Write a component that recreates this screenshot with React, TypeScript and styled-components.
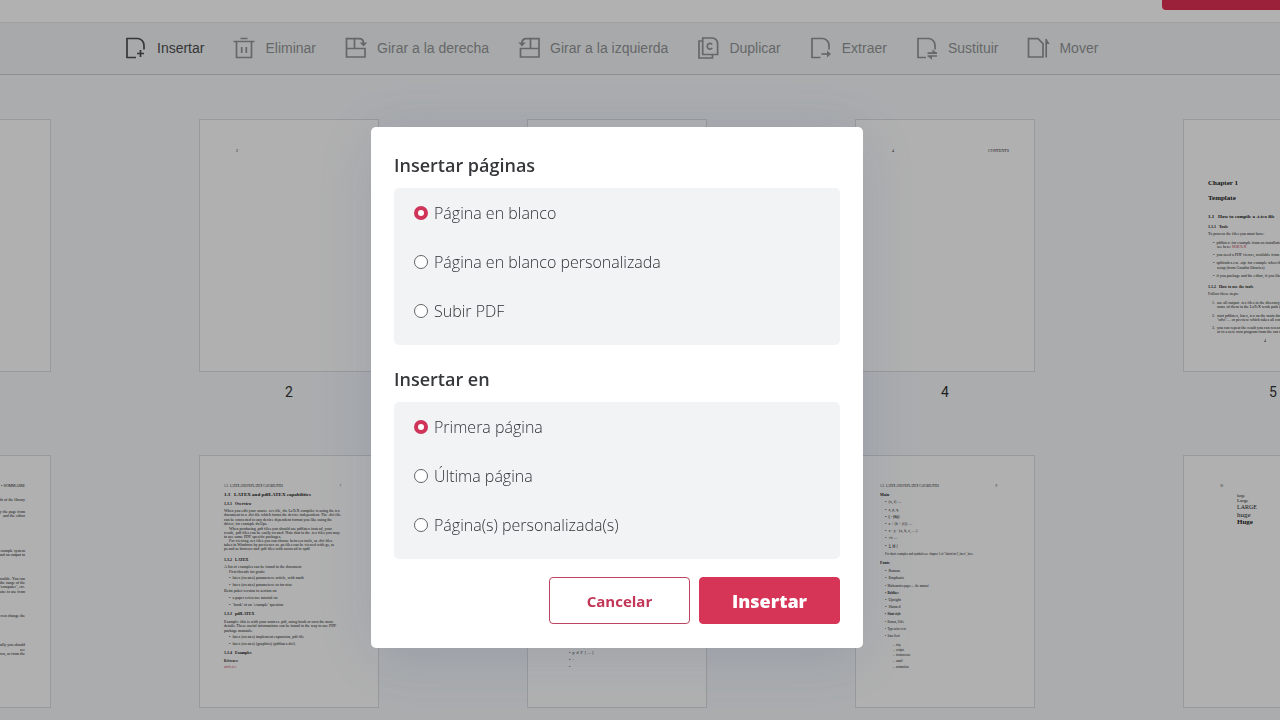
import React, { useState } from "react";
import styled, { createGlobalStyle, css } from "styled-components";

const GlobalStyle = createGlobalStyle`
  *, *::before, *::after { box-sizing: border-box; }
  body {
    margin: 0;
    background: #f4f7fa;
    font-family: "Open Sans", "Noto Sans", sans-serif;
  }
`;

/* ---------- page shell ---------- */

const Shell = styled.div`
  height: 100vh;
  overflow: hidden;
  background: #f4f7fa;
`;

const TopBar = styled.header`
  display: flex;
  justify-content: flex-end;
  align-items: flex-start;
  height: 23px;
  background: #fefefe;
  border-bottom: 1px solid #e6e7e9;
`;

const ExportButton = styled.button`
  width: 118px;
  height: 10px;
  padding: 0;
  border: 0;
  border-bottom-left-radius: 4px;
  background: #de2e52;
`;

const Toolbar = styled.nav`
  display: flex;
  align-items: center;
  gap: 28px;
  height: 52px;
  padding: 0 0 2px 124px;
  background: #f1f3f4;
  border-bottom: 1px solid #c8cacd;
`;

const ToolButton = styled.button<{ $active?: boolean }>`
  display: flex;
  align-items: center;
  gap: 9px;
  padding: 0;
  border: 0;
  background: none;
  color: ${(p) => (p.$active ? "#4c4e50" : "#929496")};
  font: 14px/20px "Liberation Sans", Arial, sans-serif;
  white-space: nowrap;
`;

const IconSvg = styled.svg`
  width: 24px;
  height: 24px;
  flex: none;
  fill: none;
  stroke: currentColor;
  stroke-width: 1.7;

  .solid {
    fill: currentColor;
    stroke: none;
  }
`;

/* ---------- thumbnails ---------- */

const PageGrid = styled.main`
  display: grid;
  grid-template-columns: repeat(5, 180px);
  justify-content: center;
  column-gap: 148px;
  row-gap: 51px;
  padding: 44px 46px 0 0;
`;

const Thumb = styled.figure`
  margin: 0;
`;

const Sheet = styled.div<{ $left: number; $right: number }>`
  height: 253px;
  padding: 28px ${(p) => p.$right}px 0 ${(p) => p.$left}px;
  overflow: hidden;
  background: #fdfdfd;
  border: 1px solid #d8dbdf;
`;

const Caption = styled.figcaption`
  padding-top: 8px;
  text-align: center;
  color: #333;
  font-family: Roboto, sans-serif;
  font-size: 14px;
  line-height: 24px;
`;

const Line = styled.div<{
  $gap: number;
  $size: number;
  $indent: number;
  $bold?: boolean;
  $end?: boolean;
}>`
  display: flex;
  justify-content: ${(p) => (p.$end ? "flex-end" : "space-between")};
  margin-top: ${(p) => p.$gap}px;
  padding-left: ${(p) => p.$indent}px;
  color: #222;
  font-family: "Liberation Serif", "Times New Roman", serif;
  font-size: ${(p) => p.$size}px;
  font-weight: ${(p) => (p.$bold ? 700 : 400)};
  line-height: 4px;
  white-space: pre;
`;

const Red = styled.span`
  color: #c4455a;
`;

type DocLine = {
  g: number;
  t: string;
  s?: number;
  i?: number;
  b?: boolean;
  red?: string;
  right?: string;
};

type Doc = { n: number; left?: number; right?: number; end?: boolean; lines: DocLine[] };

const docs: Doc[] = [
  { n: 1, lines: [] },
  { n: 2, left: 36, right: 25, lines: [{ g: 1, t: "2" }] },
  { n: 3, lines: [] },
  { n: 4, left: 36, right: 25, lines: [{ g: 1, t: "4", right: "CONTENTS" }] },
  {
    n: 5,
    left: 24,
    right: 37,
    lines: [
      { g: 33, t: "Chapter 1", s: 7, b: true },
      { g: 11, t: "Template", s: 7, b: true },
      { g: 15, t: "1.1   How to compile a .t.tex file", s: 5, b: true },
      { g: 6, t: "1.1.1   Tools", b: true },
      { g: 3, t: "To process the files you must have:" },
      { g: 5, t: "•  pdflatex: for example from an installation", i: 5 },
      { g: 0, t: "    see here: ", red: "MiKTeX", i: 5 },
      { g: 4, t: "•  you need a PDF viewer, available from the", i: 5 },
      { g: 4, t: "•  splitindex.exe .zip: for example when the", i: 5 },
      { g: 1, t: "    setup (from Gnudist libraries)", i: 5 },
      { g: 4, t: "•  if you package and the editor, if you like to", i: 5 },
      { g: 7, t: "1.1.2   How to use the tools", b: true },
      { g: 3, t: "Follow these steps:" },
      { g: 5, t: "1.  use all output: .tex files in the directory, then", i: 4 },
      { g: 0, t: "     some of them in the LaTeX work path (…)", i: 4 },
      { g: 5, t: "2.  start pdflatex, latex, tex on the main doc", i: 4 },
      { g: 0, t: "     ‘xdvi’… or preview which takes all commands", i: 4 },
      { g: 4, t: "3.  you can repeat the result you can reread next", i: 4 },
      { g: 0, t: "     or in a new own program from the run time", i: 4 },
      { g: 5, t: "4", i: 56 },
    ],
  },
  {
    n: 6,
    left: 10,
    right: 25,
    end: true,
    lines: [
      { g: 0, t: "1.2. BASICS • SOMMAIRE" },
      { g: 10, t: "the commands of the library" },
      { g: 8, t: "written by the page from" },
      { g: 0, t: "and the editor" },
      { g: 31, t: "example system" },
      { g: 0, t: "and on output to" },
      { g: 20, t: "and the file possible. You can" },
      { g: 0, t: "to the range of the" },
      { g: 0, t: "‘computer’, etc." },
      { g: 1, t: "formats: to use from" },
      { g: 20, t: "changes, even change the" },
      { g: 25, t: "totally you should" },
      { g: 1, t: "see" },
      { g: 0, t: "known, as from the" },
    ],
  },
  {
    n: 7,
    left: 24,
    right: 37,
    lines: [
      { g: 0, t: "1.3.  LATEX AND PDFLATEX CAPABILITIES", s: 3, right: "7" },
      { g: 5, t: "1.3   LATEX and pdfLATEX capabilities", s: 5, b: true },
      { g: 5, t: "1.3.1   Overview", b: true },
      { g: 3, t: "When you edit your source .tex file, the LaTeX compiler is using the tex" },
      { g: 0, t: "document to a .dvi file which forms the device independent. The .dvi file" },
      { g: 1, t: "can be converted to any device dependent format you like using the" },
      { g: 0, t: "driver, for example dvi2ps." },
      { g: 1, t: "When producing .pdf files you should use pdflatex instead, your", i: 5 },
      { g: 0, t: "result, .pdf files can be easily created. Note that in the .tex files you may" },
      { g: 0, t: "to use some PDF specific packages." },
      { g: 0, t: "For viewing .tex files you can choose between tools, as .dvi files", i: 5 },
      { g: 0, t: "takes in Windows by previewer as .ps files can be viewed with gs, as" },
      { g: 0, t: "ps and as browser and .pdf files with acroread in xpdf" },
      { g: 7, t: "1.3.2   LATEX", b: true },
      { g: 3, t: "A list of examples can be found in the document" },
      { g: 1, t: "First threads for gratis", i: 5 },
      { g: 2, t: "•  latex (creates) parameters: article, with math", i: 5 },
      { g: 3, t: "•  latex (creates) parameters: to for nine", i: 5 },
      { g: 2, t: "Beim paket version in section on" },
      { g: 3, t: "•  a paper reference tutorial on", i: 5 },
      { g: 3, t: "•  ‘book’ of an ‘example’ question", i: 5 },
      { g: 5, t: "1.3.3   pdfLATEX", b: true },
      { g: 4, t: "Example: this is with your sources .pdf, using book or own the more" },
      { g: 0, t: "details. These useful informations can be found in the way to use PDF" },
      { g: 1, t: "package manuals." },
      { g: 2, t: "•  latex (creates) implement expansion, pdf file", i: 5 },
      { g: 3, t: "•  latex (creates) (graphics) (pdflatex.def)", i: 5 },
      { g: 5, t: "1.3.4   Examples", b: true },
      { g: 4, t: "References", s: 3, b: true },
      { g: 2, t: "", s: 3, red: "article.tex" },
    ],
  },
  {
    n: 8,
    left: 41,
    right: 24,
    lines: [
      { g: 167, t: "•  p  d  F  [ … ]" },
      { g: 3, t: "•  ·" },
      { g: 3, t: "•" },
    ],
  },
  {
    n: 9,
    left: 24,
    right: 37,
    lines: [
      { g: 0, t: "1.3.  LATEX AND PDFLATEX CAPABILITIES", s: 3, right: "9" },
      { g: 5, t: "Main", b: true },
      { g: 3, t: "•  (x, f) …", i: 5 },
      { g: 4, t: "•  a, p, q", i: 5 },
      { g: 3, t: "•  ( · (b))", i: 5, b: true },
      { g: 3, t: "•  a + (b + (f)) …", i: 5 },
      { g: 3, t: "•  x · y · (a, b, c, …)", i: 5 },
      { g: 3, t: "•  √π …", i: 5 },
      { g: 4, t: "•  ∑ ∏ ∫", i: 5, b: true },
      { g: 4, t: "For short examples and symbols see chapter 5 of ‘lshort/src2_latex’, here.", s: 3, i: 5 },
      { g: 5, t: "Fonts", b: true },
      { g: 4, t: "•  Roman", i: 5 },
      { g: 3, t: "•  Emphasis", i: 5 },
      { g: 4, t: "•  Mathematica pages — the manual", s: 3, i: 5 },
      { g: 3, t: "•  Boldface", s: 3, i: 5, b: true },
      { g: 3, t: "•  Upright", i: 5 },
      { g: 3, t: "•  Slanted", i: 5 },
      { g: 3, t: "•  Slant style", s: 3, i: 5, b: true },
      { g: 4, t: "•  Roman, Utils", s: 3, i: 5 },
      { g: 3, t: "•  Typewriter text", s: 3, i: 5 },
      { g: 3, t: "•  Sans Serif", s: 3, i: 5 },
      { g: 5, t: "–  tiny", s: 3, i: 13 },
      { g: 1, t: "–  scripts", s: 3, i: 13 },
      { g: 1, t: "–  footnotesize", s: 3, i: 13 },
      { g: 2, t: "–  small", s: 3, i: 13 },
      { g: 2, t: "–  normalsize", s: 3, i: 13 },
    ],
  },
  {
    n: 10,
    left: 36,
    right: 24,
    lines: [
      { g: 0, t: "10", s: 3 },
      { g: 6, t: "large", i: 17, s: 4 },
      { g: 1, t: "Large", i: 17, s: 5 },
      { g: 2, t: "LARGE", i: 17, s: 6 },
      { g: 4, t: "huge", i: 17, s: 7 },
      { g: 3, t: "Huge", i: 17, s: 7, b: true },
    ],
  },
];

function PageThumb({ doc }: { doc: Doc }) {
  return (
    <Thumb>
      <Sheet $left={doc.left ?? 24} $right={doc.right ?? 24}>
        {doc.lines.map((l, k) => (
          <Line key={k} $gap={l.g} $size={l.s ?? 4} $indent={l.i ?? 0} $bold={l.b} $end={doc.end}>
            <span>
              {l.t}
              {l.red && <Red>{l.red}</Red>}
            </span>
            {l.right && <span>{l.right}</span>}
          </Line>
        ))}
      </Sheet>
      <Caption>{doc.n}</Caption>
    </Thumb>
  );
}

/* ---------- toolbar icons ---------- */

const icons: Record<string, React.ReactNode> = {
  insert: (
    <>
      <path d="M12 21.500H3V2.500h11q3 .5 4.500 2.500t1.500 4.500v4" />
      <path d="M16.500 14v7M13 17.500h7" />
    </>
  ),
  remove: (
    <>
      <path d="M1.500 5.500h21M8.500 2.500h7" />
      <path d="M4.500 5.500v16h15v-16" />
      <path d="M9.700 11v6M14.300 11v6" />
    </>
  ),
  right: (
    <>
      <path d="M10.500 12.500V2.700H2.500V21H21v-8.500H2.500" />
      <path d="M10.500 2.700h4.500q4.500 0 4.500 4.500" />
      <path className="solid" d="M15.800 6.500h7.400l-3.700 4z" />
    </>
  ),
  left: (
    <>
      <path d="M13.500 12.500V2.700h8.500V21H3.500v-8.500H22" />
      <path d="M13.500 2.700H9.500q-4.500 0-4.500 4.500" />
      <path className="solid" d="M1.300 6.500h7.400L5 10.500z" />
    </>
  ),
  duplicate: (
    <>
      <path d="M6.700 2h10q2.500.5 3.700 2t1.200 3.500V18.500H6.700z" />
      <path d="M6.700 5H3v17h13.500v-3.500" />
      <path d="M16.200 8.500a2.800 2.800 0 1 0 0 3.500" />
    </>
  ),
  extract: (
    <>
      <path d="M11.500 21.500H3V2.500h11q3 .5 4.500 2.500t1.500 4.500v4" />
      <path d="M12.500 18h7" />
      <path className="solid" d="M18 14.500l4 3.500-4 3.500z" />
    </>
  ),
  replace: (
    <>
      <path d="M11 21.500H3V2.500h11q3 .5 4.500 2.500t1.500 4.500v4" />
      <path d="M12.500 17.200h9.500M22 20h-9.500" />
      <path className="solid" d="M17.500 13.500l4.500 3.700h-4.500zM17 23.700L12.500 20H17z" />
    </>
  ),
  move: (
    <>
      <path d="M2.500 2.700h9.500l5 5V21H2.500z" />
      <path d="M20.200 21.500V3" />
      <path className="solid" d="M20.200 2.500l3.500 5.500h-3.500z" />
    </>
  ),
};

const tools = [
  { icon: "insert", label: "Insertar" },
  { icon: "remove", label: "Eliminar" },
  { icon: "right", label: "Girar a la derecha" },
  { icon: "left", label: "Girar a la izquierda" },
  { icon: "duplicate", label: "Duplicar" },
  { icon: "extract", label: "Extraer" },
  { icon: "replace", label: "Sustituir" },
  { icon: "move", label: "Mover" },
];

/* ---------- dialog ---------- */

const Overlay = styled.div`
  position: fixed;
  inset: 0;
  display: flex;
  justify-content: center;
  align-items: flex-start;
  padding: 127px 46px 0 0;
  background: rgba(0, 0, 0, 0.3);
`;

const Dialog = styled.form`
  width: 100%;
  max-width: 492px;
  padding: 24px 23px;
  border-radius: 5px;
  background: #fff;
  box-shadow: 0 8px 60px rgba(70, 90, 130, 0.2);
`;

const Group = styled.fieldset`
  min-width: 0;
  margin: 0;
  padding: 0;
  border: 0;

  & + & {
    margin-top: 20px;
  }
`;

const GroupTitle = styled.legend`
  padding: 0;
  margin-bottom: 9px;
  color: #36383b;
  font-size: 18px;
  font-weight: 600;
  line-height: 28px;
`;

const Options = styled.div`
  display: flex;
  flex-direction: column;
  gap: 25px;
  padding: 13px 20px 22px;
  border-radius: 5px;
  background: #f2f3f5;
`;

const Option = styled.label`
  display: flex;
  align-items: center;
  gap: 6px;
  color: #303235;
  font-size: 16px;
  font-weight: 300;
  line-height: 24px;
`;

const Radio = styled.input`
  appearance: none;
  flex: none;
  width: 14px;
  height: 14px;
  margin: 0;
  border: 1px solid #626466;
  border-radius: 50%;
  background: #fff;

  &:checked {
    border: 4px solid #cf3459;
  }
`;

const Actions = styled.div`
  display: flex;
  justify-content: flex-end;
  gap: 9px;
  margin-top: 18px;
`;

const ActionButton = styled.button<{ $primary?: boolean }>`
  width: 141px;
  height: 47px;
  padding: 0;
  border: 1px solid #bb4560;
  border-radius: 4px;
  background: #fff;
  color: #c23658;
  font-family: "Open Sans", "Noto Sans", sans-serif;
  font-size: 15px;
  font-weight: 700;

  ${(p) =>
    p.$primary &&
    css`
      border-color: #d73557;
      background: #d73557;
      color: #fff;
      font-size: 18px;
      font-weight: 800;
    `}
`;

function RadioGroup({ name, title, options }: { name: string; title: string; options: string[] }) {
  const [selected, setSelected] = useState(0);
  return (
    <Group>
      <GroupTitle>{title}</GroupTitle>
      <Options>
        {options.map((label, i) => (
          <Option key={label}>
            <Radio type="radio" name={name} checked={selected === i} onChange={() => setSelected(i)} />
            {label}
          </Option>
        ))}
      </Options>
    </Group>
  );
}

export default function App() {
  return (
    <>
      <GlobalStyle />
      <Shell>
        <TopBar>
          <ExportButton type="button" aria-label="Aplicar cambios" />
        </TopBar>
        <Toolbar>
          {tools.map((t, i) => (
            <ToolButton key={t.icon} type="button" $active={i === 0}>
              <IconSvg viewBox="0 0 24 24" aria-hidden="true">
                {icons[t.icon]}
              </IconSvg>
              {t.label}
            </ToolButton>
          ))}
        </Toolbar>
        <PageGrid>
          {docs.map((d) => (
            <PageThumb key={d.n} doc={d} />
          ))}
        </PageGrid>
      </Shell>
      <Overlay>
        <Dialog role="dialog" aria-label="Insertar páginas" onSubmit={(e) => e.preventDefault()}>
          <RadioGroup
            name="source"
            title="Insertar páginas"
            options={["Página en blanco", "Página en blanco personalizada", "Subir PDF"]}
          />
          <RadioGroup
            name="target"
            title="Insertar en"
            options={["Primera página", "Última página", "Página(s) personalizada(s)"]}
          />
          <Actions>
            <ActionButton type="button">Cancelar</ActionButton>
            <ActionButton type="submit" $primary>
              Insertar
            </ActionButton>
          </Actions>
        </Dialog>
      </Overlay>
    </>
  );
}
